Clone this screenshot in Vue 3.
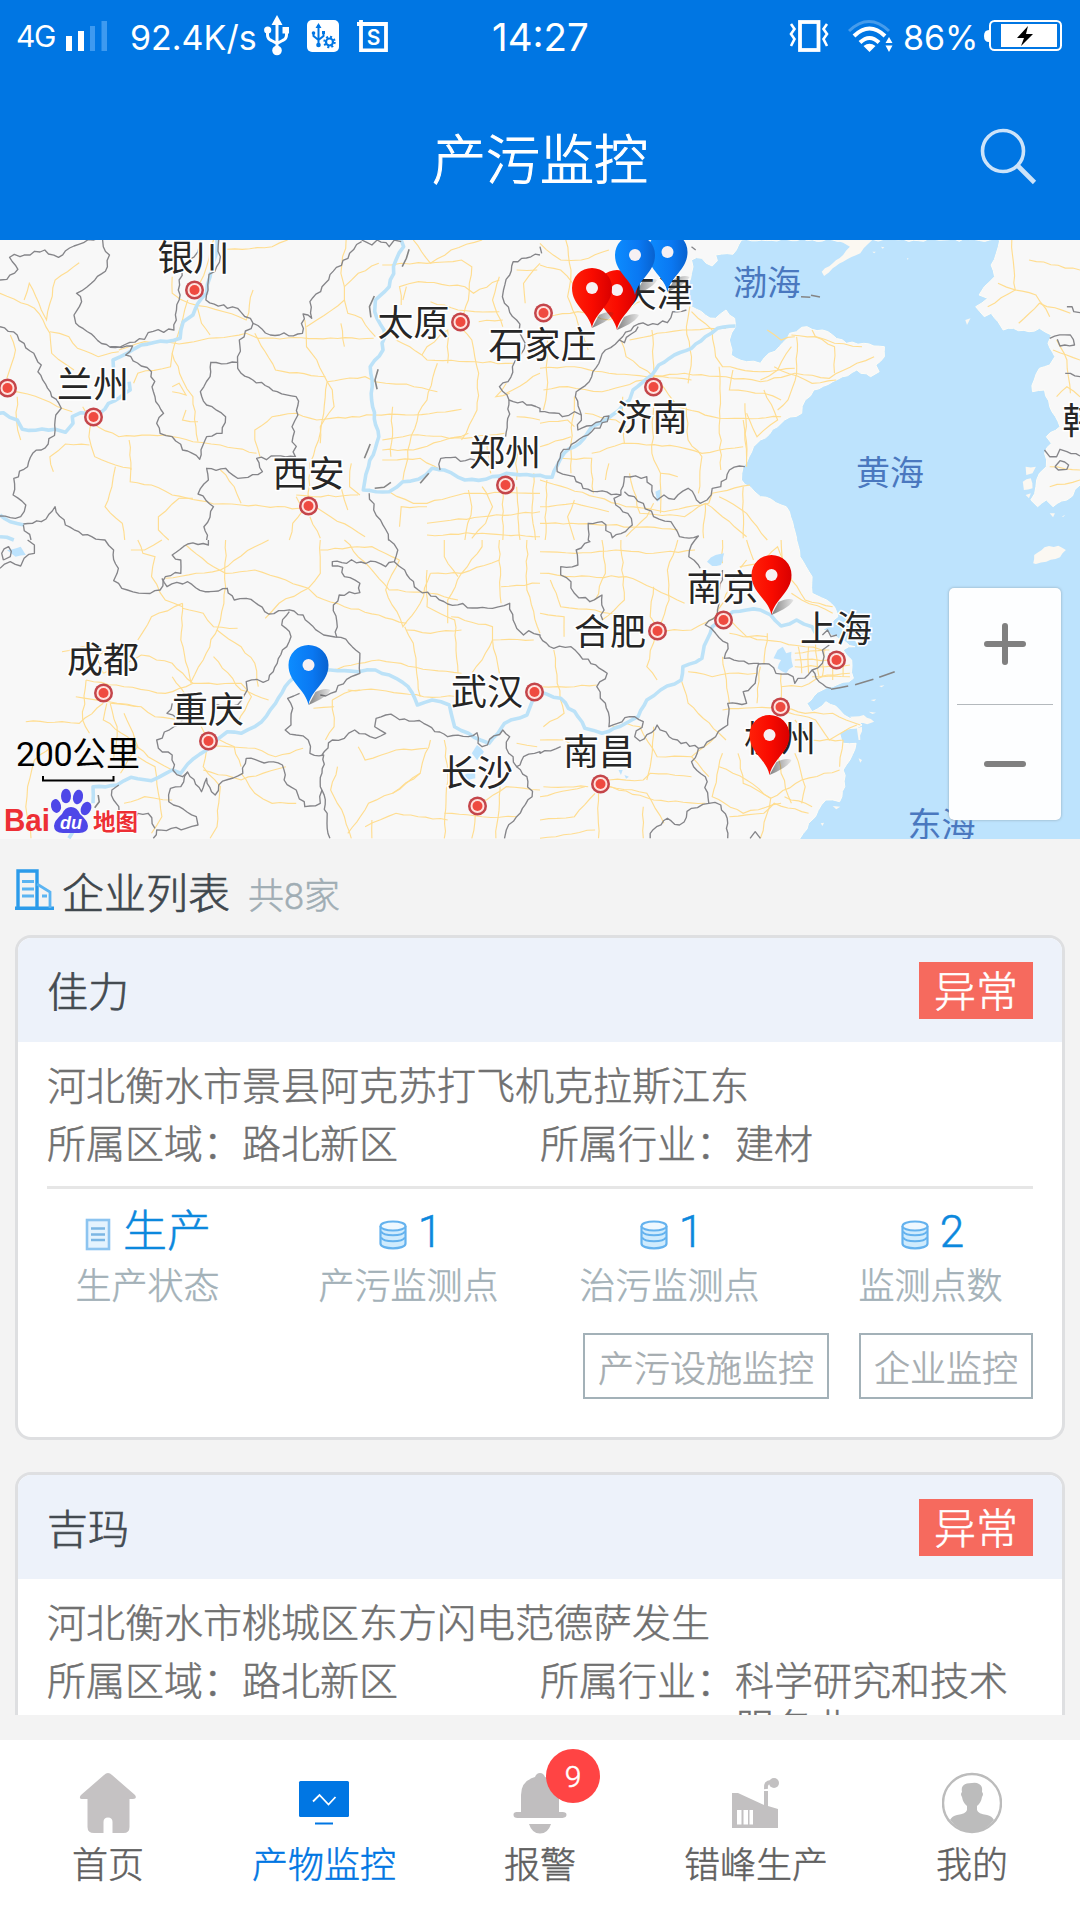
<script setup>
// Map geometry is kept in four survey sheets; a letter switches the sheet.
const KX = 540 / 1568
const KY = 1 / 3
const sheets = { A: [0, 0], B: [540, 0], C: [0, 300], D: [540, 300] }
let seed = 7
const rnd = () => {
  seed = (seed * 16807) % 2147483647
  return seed / 2147483647 - 0.5
}
function trace(spec, amp = 2, step = 7) {
  let o = sheets.A
  const pts = []
  for (const t of spec.trim().split(/\s+/)) {
    if (sheets[t]) {
      o = sheets[t]
      continue
    }
    const [x, y] = t.split(',').map(Number)
    pts.push([o[0] + x * KX, o[1] + y * KY])
  }
  let d = ''
  pts.forEach((p, i) => {
    if (i) {
      const q = pts[i - 1]
      const dx = p[0] - q[0]
      const dy = p[1] - q[1]
      const len = Math.hypot(dx, dy) || 1
      const n = Math.floor(len / step)
      for (let k = 1; k < n; k++) {
        const s = rnd() * amp * 2
        d += `L${(q[0] + (dx * k) / n - (dy / len) * s).toFixed(1)} ${(q[1] + (dy * k) / n + (dx / len) * s).toFixed(1)}`
      }
    }
    d += `${i ? 'L' : 'M'}${p[0].toFixed(1)} ${p[1].toFixed(1)}`
  })
  return d
}

const sea = trace(`B 440,60 470,55 500,78 515,62 510,45 560,43 585,0 1335,0 1325,40 1310,75 1320,110 1290,140 1275,165 1300,175 1265,200 1290,230 1310,220 1330,245 1345,270 1375,265 1420,275 1450,265 1485,285 1475,310 1495,350 1480,375 1450,385 1435,420 1430,455 1465,450 1480,500 1510,560 1470,590 1485,610 1465,640 1470,680 1450,700 1440,740 1425,780 1445,800 1470,780 1490,800 1530,780 1568,735 1590,735 1590,900
D 1590,920 755,920 755,895 780,850 800,830 830,780 870,785 885,740 880,690 900,660 918,610 880,610 870,580 935,555 900,535 870,510 830,485 790,515 775,490 820,450 910,415 905,360 880,330 915,320 860,290 820,270 865,230 845,190 790,160 790,110 755,50 745,0
B 745,895 715,800 640,770 610,740 585,720 590,680 620,620 640,600 690,560 710,540 760,520 770,480 795,450 850,425 920,390 960,410 985,395 975,375 1000,350 1000,320 940,310 890,310 820,270 760,262 725,280 695,320 665,340 640,370 600,365 555,345 550,300 568,260 565,235 540,210 510,235 480,225 440,200 425,150 440,100 440,60`, 1.6, 5) + 'Z'

const isles = [
  'B 965,0 940,25 930,40 880,65 850,85 825,108 818,95 850,70 880,45 900,20 880,8 850,-5 965,-5',
  'D 1432,70 1435,45 1465,22 1505,17 1527,30 1510,52 1470,65 1440,72',
  'D 900,530 940,525 970,545 950,553 915,545', 'D 920,565 935,560 930,600 925,600',
  'B 1235,240 1250,235 1240,255', 'B 1410,680 1440,680 1430,700 1412,705', 'B 1402,725 1425,715 1430,745 1405,750',
  'B 1410,765 1425,760 1420,775', 'B 1480,820 1495,820 1490,832', 'B 965,35 975,35 970,40', 'B 990,20 1000,22 995,26',
  'B 1065,55 1070,55 1068,60', 'D 960,480 976,478 970,484', 'D 955,515 976,518 965,522', 'D 985,438 1000,436 992,442',
  'D 925,655 935,660 930,668', 'D 815,850 825,848 820,858', 'D 850,798 872,800 860,808', 'B 1515,830 1525,824 1520,830'
].map((s) => trace(s, 0.8, 4) + 'Z')

const lakes = [
  'D 690,330 705,320 715,340 730,335 735,380 715,400 690,385 700,360 678,355',
  'D 485,65 510,45 535,40 525,75 500,78', 'C 1370,640 1385,615 1405,635 1385,660', 'C 1350,705 1375,690 1380,715 1355,722',
  'B 335,755 350,748 348,780 340,785', 'D 228,690 240,690 235,705', 'C 20,30 60,20 75,45 45,50', 'D 245,705 258,710 250,716'
].map((s) => trace(s, 1, 4) + 'Z')

const rivers = [
  'A 630,0 628,40 610,110 600,160 575,190 560,225 532,245 523,295 410,315 350,350 328,360 330,390',
  'A 375,425 378,450 315,490 290,520 235,518 210,530 212,550 190,577 160,568 65,568 50,540 10,518 -5,520',
  'A 1165,0 1172,20 1150,60 1130,140 1090,180 1088,215 1115,270 1112,330 1075,380 1082,500 1100,590 1070,680 1055,750 1130,755 1170,725 1215,718 1255,685 1290,690 1350,720 1410,718 1470,700 1568,706 B 35,712 70,640 115,610 150,560 210,525 260,480 270,450 325,405 345,375 390,345 440,325 480,290 515,265 568,258',
  'C 270,790 270,740 340,735 380,712 440,722 500,690 525,700 545,672 600,630 635,595 660,575 700,580 760,545 800,490 840,425 870,405 960,390 1040,395 1090,390 1150,415 1185,440 1212,495 1255,480 1305,495 1320,560 1360,580 1395,600 1420,610 1465,550 1530,525 1550,460 D 0,455 60,475 110,530 130,565 180,580 215,565 285,530 310,480 350,450 410,420 415,380 470,355 485,300 500,260 560,215 600,210 640,210 670,225 700,258 745,240 790,260 800,280',
  'A 0,825 30,845 70,855', 'C 200,895 215,870', 'A 0,890 20,892 40,900'
].map((s) => trace(s, 1.2, 6))

const borders = [
  'A 0,120 20,118 52,88 28,52 130,30 170,52 215,18 285,-5',
  'A 298,0 300,20 318,45 312,80 265,130 222,160 237,185 215,225 220,250 320,322 420,298 430,278 505,270 520,180 520,120 545,60 575,35 580,10',
  'A 635,0 640,50 605,120 598,180 660,205 690,205 735,250 785,285 878,280 880,222 905,235 900,185 1015,40 1050,5',
  'A 1050,0 1080,15 1095,0 1130,20 1145,0 1165,5',
  'A 320,320 385,318 365,345 410,378 440,395 450,470 475,520 455,550 465,580 500,590 530,630 580,658 600,590 645,580 655,530 600,495 582,455 610,410 612,367 690,367 695,300 735,250',
  'A 690,367 700,400 805,455 860,470 865,525 848,560 858,650 745,655 762,695 690,715 655,685 600,685 605,720 575,762 620,800 592,860 600,900',
  'A 0,260 50,285 70,310 120,375 110,395 150,470 178,505 162,525 160,570 140,612 95,640 80,680 40,715 38,765 75,795 60,830 0,828',
  'A 68,855 90,900', 'A 68,852 120,845 160,800 190,855 240,885 305,900 C 305,0 330,30 340,100 330,122 370,150 420,160 465,150 480,110 525,100 525,60 500,45 545,12 605,15 605,0',
  'C 470,115 485,140 545,125 595,155 660,145 680,180 715,175 780,222 825,212 880,225 940,285 990,292 1045,340 1045,400 1020,410 960,460 930,465',
  'C 840,215 818,255 845,290 820,330 805,370 780,420 715,425 718,450 690,495 665,500 620,495',
  'C 500,490 485,520 530,540 505,560 455,600 460,625 500,645 502,690 530,710 545,697 585,755 600,715 625,765 635,735 705,700 715,655 820,675 825,720 860,750 885,800 930,790 935,750',
  'C 870,460 835,475 850,505 845,555 828,570 860,585 895,600 900,640 940,645 930,740 950,820 958,895',
  'C 545,695 525,740 495,745 490,785 520,800 570,830 575,855 540,865 455,870 445,895',
  'C 345,735 325,750 330,780 345,800 340,835 380,850 400,820 430,820 450,865',
  'A 1072,760 1085,810 1105,840 1128,900 C 1130,0 1155,30 1145,65 1120,80 1090,65 965,65 965,78 995,82 1000,110 1045,130 1045,158 985,165 968,195 978,245 978,292',
  'C 1145,65 1175,90 1215,150 1300,192 1430,205 1480,190 1490,240 1520,285 1535,272 1568,285 D 0,290 40,325 90,320 115,345 195,400 165,440 175,475 190,490 200,560 260,530 300,545 275,590 290,603 340,555 375,590 460,625 510,590 545,555 545,490 600,490 590,455 625,430 635,370 535,355 545,310 510,280 480,255 515,225 520,160 530,120 530,90',
  'C 935,645 965,600 1000,595 1030,570 1090,595 1120,580 1088,560 1092,535 1120,525 1230,550 1300,590 1360,590 1385,578 1388,610 1400,620 1460,570 1480,590 1470,625 1490,650 1500,680 1510,675 1520,650 1568,635 D 0,640 60,620',
  'C 1500,680 1530,710 1545,770 1500,830 1470,870 1465,895',
  'A 1568,45 1490,65 1480,105 1462,150 1465,190 1500,240 1525,310 1488,380 1475,425 1450,440 1478,480 1568,505 B 0,515 55,520 65,530 100,515 120,525 110,570 200,528 195,545 125,590 60,640 50,695 100,710 125,745 235,765 245,710 310,710 340,780 360,765 390,778 430,745 465,790 485,780 500,745 525,740 550,690 595,680',
  'A 1478,480 1468,590', 'A 1380,660 1280,655 1278,690', 'B 120,525 105,455 150,410 190,330 230,300 285,252 370,248 385,215 425,210', 'B 230,300 245,308 285,260',
  'B 235,765 215,775 220,795 255,820 268,855 210,893 180,845 140,850 140,900 D 145,5 105,30 110,75 60,80 60,105 90,125 100,160 145,185 180,165 182,240',
  'B 245,755 300,790 330,830 380,845 405,890 460,888 D 450,0 432,50 460,75 465,85',
  'D 635,372 665,372 685,400 735,410 740,430 790,390 820,370 820,330 840,315', 'D 790,390 810,425 845,445',
  'D 460,625 440,665 480,710 490,790 440,805 405,855 370,835 320,880 320,895', 'D 490,790 525,795 545,850 545,895', 'D 610,895 625,875 640,895',
  'B 1480,295 1540,285 1552,315 1510,318 1502,298', 'B 1525,400 1540,400 1568,410', 'B 1465,630 1480,650 1500,650 1510,628 1530,635 1568,648',
  'B 1495,680 1510,662 1535,675 1530,688 1505,690 1495,680', 'B 1530,200 1545,200 1550,215 1568,218', 'B 440,20 452,30', 'B 0,20 5,40',
  'C 0,85 30,65 60,78 70,55 100,40 100,15 80,0', 'C 10,60 5,40 25,20 30,50 10,60', 'D 820,285 835,270 845,290 862,285'
].map((s) => trace(s, 2, 4.5))

const seaMarks = ['A 1188,28 1180,55 1168,80', 'A 1087,168 1073,200 1077,232', 'A 1098,388 1089,420 1095,448', 'A 1075,612 1058,655', 'A 1088,745 1115,742 1135,727', 'A 1220,730 1245,700', 'B 758,170 785,172', 'B 787,166 813,171', 'D 845,448 895,438', 'D 915,434 968,418', 'D 985,412 1030,395', 'C 285,765 288,785 275,803'].map((s) => trace(s, 0))

const roads = [
  'A 0,160 60,188 100,205 125,240 145,280 150,340 215,390', 'A 70,180 85,130 120,210 135,240 160,120 230,68', 'A 145,275 200,290 225,325 285,350 345,335',
  'A 20,415 45,330 30,285', 'A 20,455 80,462 210,515', 'A 50,470 48,540 60,600', 'A 240,500 268,540 258,590 275,650 335,675 380,685 378,725 440,735 500,765 620,792 700,795 870,805',
  'A 270,550 345,590 480,585 560,605 640,615 745,640', 'A 375,600 380,690', 'A 155,695 145,650 190,612 260,615', 'A 335,680 325,740 305,800 355,850 362,900',
  'A 545,180 530,240 500,340 530,420 560,470 575,605', 'A 500,340 495,380 400,400 388,430', 'A 500,455 540,465 520,430 500,440', 'A 500,110 500,160 550,190 600,200 650,215 715,240 735,150',
  'A 345,330 420,305 520,312 715,280 750,295 1085,295', 'A 570,190 585,250 610,285', 'A 620,0 600,80 580,130', 'A 660,28 790,20 835,0',
  'A 740,280 770,335 800,390 945,410', 'A 885,240 890,320 920,360 950,425 940,520 925,600 900,670 895,780', 'A 950,425 965,450 970,500 930,560 930,610', 'A 950,425 1060,410 1090,425 1120,430 1180,432 1270,455',
  'A 740,600 740,570 790,530 860,520 920,540 1085,525 1200,525 1340,508', 'A 740,600 755,650', 'A 890,260 920,240 1000,180 1000,140 1040,100 1100,70', 'A 1005,0 990,100 1000,140', 'A 1000,180 1010,220 1050,235 1090,290',
  'A 1110,75 1165,70 1240,70 1340,60 1370,80 1360,180 1340,240', 'A 1200,0 1250,70 1310,30 1400,0', 'A 1165,195 1160,140 1215,125 1350,140 1375,160 1450,120', 'A 1180,140 1170,180',
  'A 1150,300 1190,320 1240,360 1380,365 1490,370', 'A 1340,265 1370,300 1390,400 1385,510 1340,600', 'A 1250,185 1330,210 1450,215', 'A 1390,245 1460,240', 'A 1300,370 1300,270 1240,320 1225,345', 'A 1270,370 1240,480 1215,520 1190,610 1170,720',
  'A 1110,600 1190,585 1350,595 1465,580', 'A 1110,630 1200,630 1360,580', 'A 1110,660 1220,655 1280,690', 'A 860,765 910,770 1040,765', 'A 905,790 960,830 1060,890', 'A 880,810 850,850 840,900', 'A 900,830 930,895',
  'A 640,690 680,740 700,790', 'A 860,770 870,790', 'A 990,740 1000,780 1010,810', 'A 1020,670 1015,740 1045,765', 'A 520,775 460,830 460,870 490,900', 'A 520,775 560,775', 'A 540,510 530,540 575,545',
  'A 1130,755 1200,790 1240,790 1350,760 1568,760', 'A 1460,750 1460,900', 'A 1500,740 1510,900', 'A 1360,750 1370,800 1350,900', 'A 1240,850 1400,830 1568,815', 'A 1160,860 1165,800 1240,800', 'A 1240,885 1400,880 1568,890', 'A 1400,740 1430,800 1410,850 1370,895', 'A 1550,700 1545,800 1555,900', 'A 1568,70 1520,130 1525,190', 'A 1450,110 1430,180 1460,260',
  'A 1500,90 1560,90', 'A 1470,460 1568,400', 'A 1480,460 1440,470 1470,430', 'A 1500,530 1568,540', 'A 1140,500 1135,650', 'A 990,250 1000,320', 'A 1410,590 1425,700', 'A 1500,595 1500,720',
  'B 0,75 60,90 95,130 160,160', 'B 75,0 90,90 80,170 110,250 140,330', 'B 0,10 60,60 120,60 200,30', 'B 20,230 110,215 200,240 300,180', 'B 0,385 100,380 200,400 310,410 420,400 540,410 640,425 740,400', 'B 10,450 80,440 180,455 300,420', 'B 20,270 20,450 10,510',
  'B 235,300 250,350 330,410 440,420', 'B 260,300 340,280 440,270 540,265', 'B 325,270 330,420', 'B 435,200 425,260 440,350 430,430', 'B 440,215 500,270 510,350 530,380 640,395 740,385', 'B 520,380 525,690', 'B 560,390 550,450 650,460 700,480',
  'B 745,290 745,400 720,480 690,510', 'B 730,285 800,290 855,310 935,320', 'B 790,270 800,290 855,320 855,400', 'B 740,400 840,415 920,370 970,350', 'B 640,420 690,390 730,320', 'B 350,430 400,500 520,535 590,535 700,530', 'B 240,470 245,610', 'B 330,500 325,640 350,700 350,820', 'B 130,520 220,540 250,560',
  'B 150,640 240,610 400,620 470,640 590,620', 'B 60,655 150,655 155,760', 'B 425,500 430,600 470,650 460,760', 'B 595,490 600,650', 'B 590,540 595,600 600,680', 'B 600,520 630,590 690,540 650,450', 'B 100,470 90,610 90,700', 'B 0,550 80,540 100,560', 'B 0,620 90,590',
  'B 200,670 190,720', 'B 0,720 80,745 250,800 360,815 490,790', 'B 20,720 15,900', 'B 0,800 100,790 200,815', 'B 350,700 400,710', 'B 490,790 500,760 610,735', 'B 260,700 290,820 420,830 480,790 530,830 600,890', 'B 590,740 590,895', 'B 480,790 475,895', 'B 0,850 90,850 200,855 400,870', 'B 100,780 80,830 100,900', 'B 330,790 310,830 250,890', 'B 520,770 600,820 660,900', 'B 660,270 700,300 740,290', 'B 860,420 790,430 680,380',
  'B 1370,0 1380,150 1440,165 1480,230', 'B 1300,200 1380,150 1330,130', 'B 1420,60 1568,90', 'B 1390,250 1450,190 1540,220', 'B 1490,330 1568,360', 'B 1500,470 1530,440 1568,470', 'B 1480,740 1568,720', 'B 1480,680 1568,690', 'B 1500,300 1530,360 1540,460',
  'C 400,0 415,40 450,50 440,110 480,180 530,200', 'C 380,30 420,30 470,0', 'C 540,15 620,80 655,100 740,90 830,120 895,145', 'C 655,0 655,140 640,240 590,360 555,425', 'C 480,115 570,100 640,90 740,20 780,0', 'C 895,145 930,100 930,0', 'C 895,145 810,190 770,235', 'C 895,145 920,170 1000,200 1100,225 1180,250', 'C 400,300 440,230 530,190', 'C 530,190 525,300 555,430', 'C 530,205 590,220 620,260 690,265', 'C 630,270 700,320 740,370 750,440', 'C 180,335 240,320 330,340',
  'C 300,400 410,345 500,370 560,430', 'C 250,420 360,440 480,460 560,430', 'C 250,420 240,540 260,580', 'C 310,490 300,540 370,590 430,650 500,690', 'C 75,545 180,545 230,550 300,490', 'C 320,490 340,560 330,660', 'C 320,490 410,500 450,530 520,540', 'C 500,410 560,500 600,600', 'C 560,430 700,430 730,470 690,550', 'C 620,350 700,450 780,480', 'C 220,470 340,490 400,500', 'C 300,400 280,350 310,330',
  'C 90,895 75,800 80,740 100,660 150,620', 'C 350,700 400,620 360,520', 'C 400,650 450,680 460,760 470,830 440,880', 'C 600,630 590,680 640,740 630,860 610,895', 'C 610,590 680,620 700,680', 'C 610,620 740,625 800,650 880,625', 'C 500,780 420,770 360,790', 'C 700,700 740,760 790,790 860,790', 'C 590,690 700,720 830,680', 'C 960,390 1100,360 1250,390 1340,400', 'C 1000,0 1130,150 1250,160 1330,180', 'C 930,30 1080,20 1160,60',
  'C 1240,90 1240,200 1320,240 1330,400', 'C 1250,100 1340,100 1450,60', 'C 1340,100 1300,180 1300,250', 'C 1330,110 1290,50 1290,0', 'C 1340,100 1400,20 1400,0', 'C 1450,0 1455,190', 'C 1175,260 1200,310 1210,400 1220,470', 'C 1310,230 1430,260 1430,300 1550,300', 'C 1430,300 1400,360 1370,400', 'C 1430,300 1450,400', 'C 1455,140 1568,130', 'C 1530,0 1530,150 1568,280', 'C 1160,60 1120,150 1170,260 1220,190 1250,100', 'C 965,480 970,560 945,600', 'C 910,505 970,500', 'C 1010,450 1100,450 1230,470 1330,470', 'C 965,480 1000,460 1045,450', 'C 1180,270 1250,280 1340,270',
  'C 1040,620 1060,660 1150,630 1240,625', 'C 1140,760 1220,700 1235,640 1250,600', 'C 980,680 960,750 1000,830 1020,895', 'C 1010,880 1070,790 1140,760 1220,700', 'C 1290,600 1300,700 1290,895', 'C 1380,820 1370,895', 'C 1290,820 1400,830 1500,830', 'C 1060,860 1150,820 1300,840', 'C 1450,660 1450,790 1440,895', 'C 1395,790 1470,740 1568,750', 'C 1500,610 1560,620', 'C 1080,840 1080,895',
  'D 0,35 100,40 220,30 330,40 450,30', 'D 0,100 100,110 250,110 330,145 420,190', 'D 180,0 190,100 160,180', 'D 235,0 245,180 180,240', 'D 330,140 320,230 340,260 310,380 340,420', 'D 340,270 440,270 510,230 560,120 600,60', 'D 400,0 370,90 375,180 345,260', 'D 30,120 60,200 160,210 300,240', 'D 0,220 70,230 70,290', 'D 530,70 530,0', 'D 580,80 640,70 690,20 730,120 770,180 850,200', 'D 600,0 620,60', 'D 700,0 710,90',
  'D 550,280 650,300 770,320 840,330', 'D 540,230 600,290 660,290', 'D 660,280 650,370', 'D 730,160 760,180 850,220', 'D 740,340 830,330', 'D 740,360 840,360', 'D 750,320 760,400', 'D 780,320 780,400', 'D 800,310 810,410', 'D 825,325 820,410', 'D 740,380 900,375', 'D 790,410 900,400', 'D 850,385 850,420', 'D 880,370 880,410', 'D 700,440 760,440 820,410 900,410', 'D 700,400 700,490', 'D 640,380 630,490', 'D 530,510 690,500 770,520 850,520 930,555', 'D 700,510 800,540 840,600 920,555', 'D 430,395 500,410 550,400 630,400', 'D 410,420 430,490 520,580 540,600',
  'D 0,440 100,440 165,435', 'D 40,330 50,430 70,520 10,560', 'D 0,600 70,600 130,640', 'D 210,560 250,550 290,560 340,650 440,650 510,590', 'D 530,350 550,490', 'D 330,560 320,680 310,720', 'D 200,720 300,720 320,700 440,710', 'D 10,740 140,740', 'D 170,760 170,895', 'D 0,770 130,740', 'D 200,740 310,760 360,850', 'D 190,735 330,780 480,790', 'D 0,840 100,830 160,760', 'D 530,640 500,770 590,820 700,790', 'D 520,680 600,720 670,775', 'D 575,640 590,730 670,775 640,895', 'D 670,775 760,720 870,690', 'D 680,590 700,700 730,790', 'D 710,770 790,800', 'D 740,640 770,740 760,790', 'D 880,600 870,680', 'D 740,540 790,600 880,600', 'D 550,830 650,820 680,790 780,820', 'D 300,800 300,895', 'D 0,895 160,870', 'D 440,650 490,710'
].map((s) => trace(s, 1, 7))

const cities = [
  ['银川', 193.5, 17], ['兰州', 93, 144], ['西安', 308.5, 233], ['太原', 413.5, 82], ['石家庄', 542.5, 104], ['郑州', 505, 212], ['天津', 656.5, 53], ['济南', 652, 177],
  ['成都', 103, 419], ['重庆', 208, 469], ['武汉', 487, 451], ['长沙', 477, 532], ['南京', 722.5, 347], ['合肥', 610, 391], ['上海', 836, 388], ['南昌', 599, 511], ['杭州', 780, 498], ['韩国', 1098.5, 180]
]
const seas = [['渤海', 767, 42], ['黄海', 890, 232], ['东海', 941.5, 584]]
const dots = [[194, 50], [7, 148], [93, 177], [460, 82], [308, 266], [505, 245], [543, 73], [653, 147], [103, 453], [208, 501], [534, 452], [477, 566], [657, 391], [723, 380], [836, 420], [780, 467], [600, 544]]
const pins = [['red', 617, 90], ['red', 592, 88], ['blue', 667.5, 52], ['blue', 635, 55], ['blue', 308.5, 465], ['red', 771.5, 375], ['red', 769.5, 535]]

const companies = [
  { name: '佳力', address: '河北衡水市景县阿克苏打飞机克拉斯江东', area: '路北新区', trade: '建材' },
  { name: '吉玛', address: '河北衡水市桃城区东方闪电范德萨发生', area: '路北新区', trade: '科学研究和技术服务业' }
]
const stats = [
  { value: '生产', label: '生产状态', doc: true },
  { value: '1', label: '产污监测点' },
  { value: '1', label: '治污监测点' },
  { value: '2', label: '监测点数' }
]
</script>

<template>
  <div class="page">
    <header class="top">
      <div class="status">
        <span class="net">4G</span>
        <svg class="signal" width="42" height="32"><path d="M0 15h6v15H0zM12 10h6v20h-6z" fill="#fff" /><path d="M24 5h5v25h-5zM35.500 0h5.500v30h-5.500z" fill="#3e9af0" /></svg>
        <span class="speed">92.4K/s</span>
        <svg class="usb" width="26" height="42" viewBox="0 0 26 42"><g fill="none" stroke="#fff" stroke-width="3"><path d="M13 8v28M3.500 17v4q0 4 4 5.500l5.500 3M22.500 17v4q0 4-4 5.500l-5.500 3" /></g><g fill="#fff"><path d="M13 1l5.500 10h-11zM18.500 13h6.500v6.500h-6.500z" /><circle cx="3.700" cy="16" r="3.600" /><circle cx="13" cy="36.500" r="4.800" /></g></svg>
        <svg class="debug" width="32" height="32"><rect width="32" height="32" rx="5" fill="#fff" /><g fill="none" stroke="#0076e3" stroke-width="2"><path d="M11.500 5v20M6.500 13v3l5 4M16.500 13v3l-5 4" /><circle cx="22.500" cy="22" r="3.500" stroke-width="2.200" /><circle cx="22.500" cy="22" r="5.200" stroke-dasharray="2 2.080" /></g><path d="M11.500 3l3 5h-6zM15 11h3v3h-3z" fill="#0076e3" /><circle cx="6.500" cy="13" r="1.800" fill="#0076e3" /><circle cx="11.500" cy="25" r="2.300" fill="#0076e3" /></svg>
        <svg class="shot" width="32" height="32"><path d="M4 0v30.300h25V4H0" fill="none" stroke="#fff" stroke-width="3.800" /><text x="16.500" y="24.500" text-anchor="middle" font-size="21" font-weight="600" fill="#fff">S</text></svg>
        <span class="clock">14:27</span>
        <svg class="vibrate" width="40" height="34"><rect x="11" y="3" width="18.500" height="28" fill="none" stroke="#fff" stroke-width="3.800" /><path d="M2 5l3.500 5L2 15l3.500 5L2 27M38 5l-3.500 5 3.500 5-3.500 5 3.500 7" fill="none" stroke="#fff" stroke-width="2.600" /></svg>
        <svg class="wifi" width="46" height="34"><g fill="none" stroke="#fff"><path d="M1 12q20-19 40 0" stroke-width="3" opacity=".28" /><path d="M6 17q15.500-15 31 0" stroke-width="4" /><path d="M12 23.500q9.500-9 19 0" stroke-width="4" /></g><path d="M15.500 27q6-4.500 12 0l-6 6zM37.500 24l3.500-6 3.500 6zM37.500 26.500h7l-3.500 6.500z" fill="#fff" /></svg>
        <span class="power">86%</span>
        <svg class="battery" width="78" height="32"><rect x="6" y="1" width="71" height="29" rx="4.500" fill="none" stroke="#fff" stroke-width="2" /><path d="M17 4h56v23H17zM5 10v12q-5 0-5-6t5-6z" fill="#fff" /><path d="M44 6L33 18h7l-3 8 12-12h-7z" fill="#000" /></svg>
      </div>
      <div class="bar">
        <h1>产污监控</h1>
        <svg class="search" width="58" height="58" viewBox="0 0 58 58"><g fill="none" stroke="#fff" opacity=".8"><circle cx="24" cy="24" r="20.500" stroke-width="3.600" /><path d="M39 39l16.500 16.500" stroke-width="4.600" /></g></svg>
      </div>
    </header>

    <section class="map">
      <svg width="1080" height="599" viewBox="0 0 1080 599">
        <defs>
          <linearGradient id="red" x1="0" x2="1"><stop offset="0" stop-color="#ff2008" /><stop offset=".5" stop-color="#f90b00" /><stop offset="1" stop-color="#d90000" /></linearGradient>
          <linearGradient id="blue" x1="0" x2="1"><stop offset="0" stop-color="#0c8cff" /><stop offset=".6" stop-color="#0a78f2" /><stop offset="1" stop-color="#0862cf" /></linearGradient>
          <linearGradient id="shade" x1="0" x2="1"><stop offset="0" stop-color="#333" stop-opacity=".6" /><stop offset="1" stop-color="#333" stop-opacity=".1" /></linearGradient>
        </defs>
        <rect width="1080" height="599" fill="#f8f8f8" />
        <path :d="sea" fill="#bde3fd" stroke="#fffdf6" stroke-width="1" />
        <path v-for="(d, i) in isles" :key="'i' + i" :d="d" fill="#fbf8f2" />
        <path v-for="(d, i) in roads" :key="'r' + i" :d="d" fill="none" stroke="#ffdd90" stroke-width="1.150" />
        <path v-for="(d, i) in lakes" :key="'l' + i" :d="d" fill="#bde3fd" />
        <path v-for="(d, i) in rivers" :key="'v' + i" :d="d" fill="none" stroke="#bce2f8" stroke-width="3.600" stroke-linejoin="round" />
        <path v-for="(d, i) in borders" :key="'b' + i" :d="d" fill="none" stroke="#858589" stroke-width="1.350" stroke-linejoin="round" />
        <path v-for="(d, i) in seaMarks" :key="'m' + i" :d="d" fill="none" stroke="#858585" stroke-width="1.600" />
        <g class="city"><text v-for="c in cities" :key="c[0]" :x="c[1]" :y="c[2] + 13.500">{{ c[0] }}</text></g>
        <g class="water"><text v-for="c in seas" :key="c[0]" :x="c[1]" :y="c[2] + 12.500">{{ c[0] }}</text></g>
        <g v-for="(p, i) in dots" :key="'d' + i" :transform="`translate(${p[0] + 0.5} ${p[1]})`"><circle r="9.500" fill="#c4454a" /><circle r="7" fill="#ffe2de" /><circle r="5" fill="#ef4a40" /></g>
        <g v-for="(p, i) in pins" :key="'p' + i" :transform="`translate(${p[1]} ${p[2]})`">
          <path d="M0 0L7-13Q17-18 22-15Q19-8 0 0z" fill="url(#shade)" />
          <path d="M0 0C-3-16-20-22-20-40A20 20 0 0 1 20-40C20-22 3-16 0 0z" :fill="`url(#${p[0]})`" />
          <circle cy="-40" r="6" fill="#f7f0f3" />
        </g>
        <g class="logo">
          <text x="4" y="591" font-size="32" textLength="46" lengthAdjust="spacingAndGlyphs" fill="#ed2f35">Bai</text>
          <g fill="#4e47e8"><ellipse cx="56" cy="566" rx="5" ry="7" transform="rotate(-12 56 566)" /><ellipse cx="66" cy="556" rx="5" ry="7.300" /><ellipse cx="78" cy="557" rx="5" ry="7.300" transform="rotate(12 78 557)" /><ellipse cx="86" cy="568.500" rx="5" ry="7" transform="rotate(25 86 568.500)" /><path d="M71 567q6 0 9 7 8 7 8 12 0 7-9 7h-16q-9 0-9-7 0-5 8-12 3-7 9-7z" /></g>
          <text x="71" y="589" text-anchor="middle" font-size="18" font-style="italic" fill="#fff">du</text>
          <text x="93" y="590" font-size="23" textLength="45" lengthAdjust="spacingAndGlyphs" fill="#ed2f35" stroke="#fff" stroke-width="2" paint-order="stroke">地图</text>
        </g>
        <path d="M43 536v4.500h70.500V536" fill="none" stroke="#000" stroke-width="2" />
        <text class="scale" x="16" y="526" textLength="124">200公里</text>
      </svg>
      <div class="zoom">
        <button><svg width="42" height="42"><path d="M3 21h36M21 3v36" stroke="#808080" stroke-width="6" stroke-linecap="round" /></svg></button>
        <i />
        <button><svg width="42" height="42"><path d="M3 21h36" stroke="#808080" stroke-width="6" stroke-linecap="round" /></svg></button>
      </div>
    </section>

    <section class="list">
      <div class="heading">
        <svg width="40" height="42" viewBox="0 0 40 42"><g fill="none" stroke="#2b9bea"><path d="M3 40V2h19v38M0 39.300h39" stroke-width="3.400" /><path d="M22 15l13 8v16" stroke-width="2.800" stroke="#5bb4f2" /><path d="M7 12.500h12M7 20h12M7 27h12M27 27h5" stroke-width="2.800" stroke="#5bb4f2" /></g></svg>
        <h2>企业列表</h2>
        <small>共<em>8</em>家</small>
      </div>
      <div class="scroll">
        <article v-for="c in companies" :key="c.name" class="card">
          <div class="card-head"><h3>{{ c.name }}</h3><span class="badge">异常</span></div>
          <div class="info">
            <p>{{ c.address }}</p>
            <dl>
              <div><dt>所属区域：</dt><dd>{{ c.area }}</dd></div>
              <div><dt>所属行业：</dt><dd>{{ c.trade }}</dd></div>
            </dl>
          </div>
          <div class="stats">
            <div v-for="s in stats" :key="s.label" class="stat">
              <div class="value">
                <svg v-if="s.doc" width="28" height="34" viewBox="0 0 28 34"><rect x="3" y="2" width="22" height="29" fill="#e4f3fe" stroke="#8cc4f0" stroke-width="2.600" /><path d="M7 10.500h14M7 16.500h14M7 22h14" stroke="#7bb6e4" stroke-width="2.400" /></svg>
                <svg v-else width="28" height="34" viewBox="0 0 28 34"><path d="M1.500 8v17.500c0 6.500 25 6.500 25 0V8" fill="#cfebfd" stroke="#64b2ee" stroke-width="2.200" /><ellipse cx="14" cy="8" rx="12.500" ry="4.600" fill="#eef8ff" stroke="#64b2ee" stroke-width="2" /><path d="M2 13.500c3 5 21 5 24 0M2 19.500c3 5 21 5 24 0" fill="none" stroke="#64b2ee" stroke-width="2.200" /></svg>
                <b>{{ s.value }}</b>
              </div>
              <span>{{ s.label }}</span>
            </div>
          </div>
          <div class="actions"><button>产污设施监控</button><button>企业监控</button></div>
        </article>
      </div>
    </section>

    <nav class="tabs">
      <a><svg width="60" height="62" viewBox="0 0 60 62"><path d="M30 1q2 0 4 2l23 20q2.500 4-2 4h-3.500v28q0 6-6 6h-11V50q0-4.500-4.500-4.500T25.500 50v11h-9.500q-6.500 0-6.500-6V27H5q-5 0-2-4L26 3q2-2 4-2z" fill="#c5c2c3" /></svg>首页</a>
      <a class="on"><svg width="60" height="62" viewBox="0 0 60 62"><rect x="5" y="9" width="50" height="36" rx="1.500" fill="#0076e3" /><path d="M21 51.500h18" stroke="#0076e3" stroke-width="2" /><path d="M19 29.500l6.500-6.500 9 9.500 7-7.500" fill="none" stroke="#fff" stroke-width="1.800" /></svg>产物监控</a>
      <a><span class="count">9</span><svg width="60" height="62" viewBox="0 0 60 62"><path d="M30 1q3.500 0 5 4 14 4 14 18v17h3.500q4 0 4 2.700T52.500 46h-45q-4 0-4-3.200T7.500 40H11V23Q11 9 25 5q1.500-4 5-4zM19 52h22q-3 9.500-11 9.500T19 52z" fill="#c0bebf" /></svg>报警</a>
      <a><svg width="60" height="62" viewBox="0 0 60 62"><path d="M6 21h6l26 12V19h4v15l10 3v19H6zM11 38v14.500h4.500V38zM17.500 38v14.500H22V38zM23.500 38v14.500h3.500V38z" fill="#c2c0c1" fill-rule="evenodd" /><path d="M40 17q-1-7 5-7" fill="none" stroke="#c2c0c1" stroke-width="4" /><circle cx="48" cy="11" r="5" fill="#c2c0c1" /></svg>错峰生产</a>
      <a><svg width="60" height="62" viewBox="0 0 60 62"><ellipse cx="30" cy="31" rx="29" ry="29" fill="#fff" stroke="#bcbcbc" stroke-width="2.400" /><path d="M30 11q4-1 7 1 4 2 3 8 2 2 0 5-1 6-5 9v4q1 4 10 5 5 1 7 5-9 12-22 12T8 48q2-4 7-5 9-1 10-5v-4q-4-3-5-9-2-3 0-5-2-9 10-9z" fill="#bcbcbc" /></svg>我的</a>
    </nav>
  </div>
</template>

<style>
body { background: #f3f3f3; }
</style>

<style scoped>
.page { width: 1080px; height: 1920px; display: flex; flex-direction: column; background: #f3f3f3; overflow: hidden; font-family: Roboto, "Noto Sans CJK SC", sans-serif; font-weight: 300; }
h1, h2, h3, p, dl, dd { margin: 0; font-weight: inherit; }
.bar, .list, .tabs { -webkit-text-stroke: 0.5px currentColor; }
svg { flex: none; display: block; }
button { background: none; font: inherit; padding: 0; border: 0; }
.top { height: 240px; background: #0076e3; color: #fff; flex: none; }
.status { height: 72px; display: flex; align-items: center; padding: 0 18px 0 16px; box-sizing: border-box; font-family: Inter, sans-serif; font-weight: 400; white-space: nowrap; }
.net { font-size: 30px; width: 50px; letter-spacing: -1.5px; }
.signal { margin-top: 2px; }
.speed { font-size: 34px; width: 134px; margin-left: 22px; margin-top: 2px; }
.usb { margin-top: -3px; }
.debug { margin-left: 17px; }
.shot { margin-left: 18px; }
.clock { font-size: 38.5px; width: 297px; margin-left: 103px; margin-top: 2px; }
.wifi { margin-left: 19px; }
.power { font-size: 34px; width: 72px; margin-left: 9px; margin-right: auto; margin-top: 2px; }
.bar { height: 168px; display: grid; grid-template-columns: 1fr auto 1fr; align-items: center; }
.bar h1 { font-size: 54px; line-height: 80px; grid-column: 2; margin-bottom: -11px; -webkit-text-stroke-width: 1px; }
.search { justify-self: end; margin: 0 43px 0 0; }
.map { height: 599px; flex: none; position: relative; overflow: hidden; }
.city text, .water text { text-anchor: middle; font-family: "Noto Sans CJK SC", sans-serif; paint-order: stroke; }
.city text { font-size: 36px; font-weight: 400; fill: #262626; stroke: #fff; stroke-width: 3px; }
.water text { font-size: 34px; font-weight: 400; fill: #4a78bf; }
.logo text { font-family: "Liberation Sans", "Noto Sans CJK SC", sans-serif; font-weight: 700; }
.scale { font-size: 34px; font-weight: 400; fill: #000; }
.zoom { position: absolute; left: 949px; top: 348px; width: 112px; height: 232px; box-sizing: border-box; background: #fdfeff; border-radius: 5px; box-shadow: 0 0 3px #8fa6b5; display: flex; flex-direction: column; align-items: center; }
.zoom button { flex: 1; display: grid; place-items: center; }
.zoom button:first-child { padding-bottom: 3px; }
.zoom button:last-child { padding-top: 3px; }
.zoom i { width: 96px; height: 1px; background: #b4b9bd; }
.list { flex: none; height: 876px; }
.heading { height: 96px; display: flex; align-items: center; padding-left: 15px; box-sizing: border-box; }
.heading svg { margin-top: 5px; }
.heading h2 { font-size: 42px; line-height: 60px; color: #3f474d; margin: 16px 0 0 7px; -webkit-text-stroke-width: 0.7px; }
.heading small { font-size: 36px; line-height: 50px; color: #a0adb4; margin: 19px 0 0 18px; }
.heading em { font-style: normal; }
.scroll { height: 780px; overflow: hidden; padding: 0 15px; }
.card { min-height: 505px; box-sizing: border-box; border: 3px solid #dedfe1; border-radius: 16px; background: #fff; margin-bottom: 32px; overflow: hidden; }
.card-head { height: 104px; background: #edf2fa; display: flex; align-items: center; justify-content: space-between; padding: 0 29px; }
.card-head h3 { font-size: 41px; line-height: 60px; color: #444b51; margin-top: 6px; -webkit-text-stroke-width: 0.7px; }
.badge { width: 114px; height: 57px; line-height: 61px; text-align: center; background: #f66a5e; color: #fff; font-size: 42px; }
.info { margin: 0 29px; padding: 22px 0 17px; font-size: 39px; line-height: 47px; color: #707070; border-bottom: 3px solid #e6e6e6; }
.info dl { display: flex; margin-top: 11px; }
.info dl > div { width: 493px; display: flex; flex: none; }
.info dt { flex: none; }
.info dd { width: 297px; }
.stats { display: flex; height: 137px; padding-top: 16px; box-sizing: border-box; }
.stat { flex: 1; display: flex; flex-direction: column; align-items: center; position: relative; left: -1px; }
.value { display: flex; align-items: center; gap: 11px; height: 54px; color: #0b88dd; }
.value svg { margin-top: 6px; }
.value b { font-weight: 300; font-size: 44px; line-height: 54px; }
.stat:not(:first-child) .value { padding-left: 4px; }
.stat span { font-size: 36px; line-height: 50px; color: #a3b1b8; margin-top: 3px; }
.actions { display: flex; justify-content: flex-end; gap: 30px; padding: 7px 29px 0; }
.actions button { height: 66px; box-sizing: border-box; border: 2px solid #a3b1b8; padding: 0 13px; font-size: 36px; color: #a5acb0; -webkit-text-stroke: inherit; }
.tabs { flex: none; margin-top: 25px; height: 180px; background: #fff; display: flex; }
.tabs a { flex: 1; position: relative; display: flex; flex-direction: column; align-items: center; padding-top: 32px; box-sizing: border-box; font-size: 36px; line-height: 52px; color: #606060; }
.tabs svg { margin-bottom: 6px; }
.tabs .on { color: #0076e3; }
.count { position: absolute; left: 114px; top: 9px; width: 54px; height: 54px; line-height: 56px; border-radius: 50%; background: #ff4444; color: #fff; font-size: 30px; text-align: center; }
</style>
